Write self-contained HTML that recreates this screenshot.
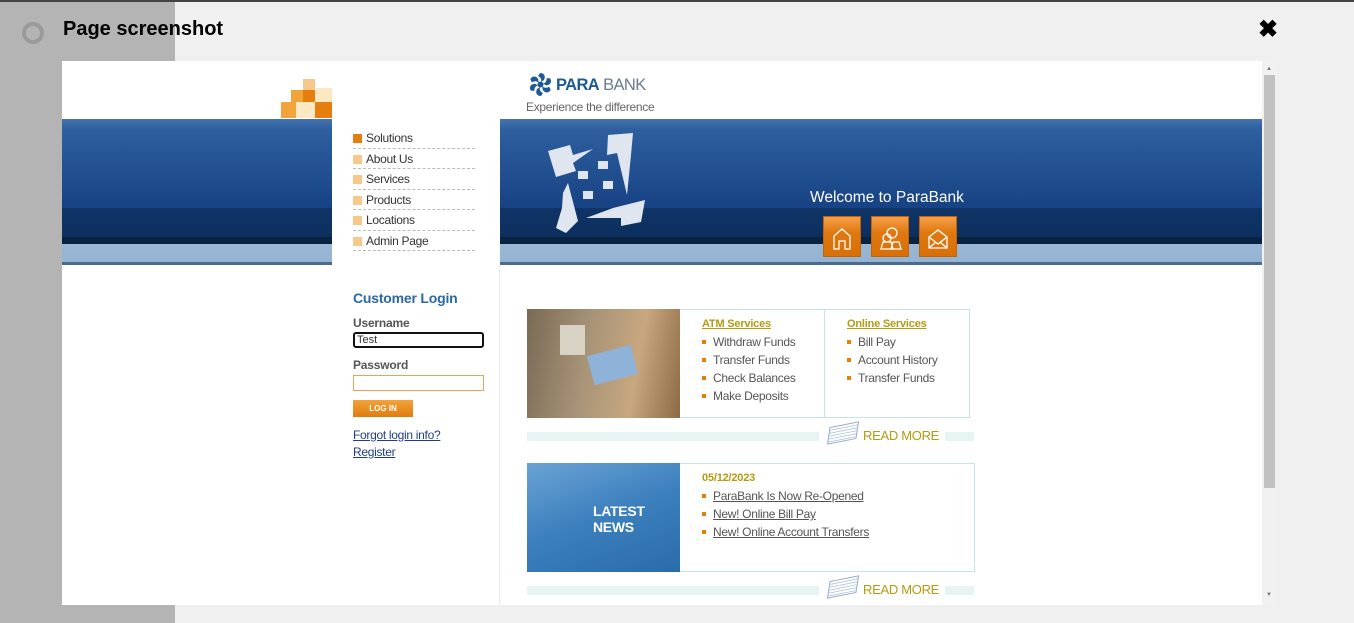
<!DOCTYPE html>
<html><head><meta charset="utf-8"><style>
*{margin:0;padding:0;box-sizing:border-box}
body{width:1354px;height:623px;overflow:hidden;background:#f0f0f0;font-family:"Liberation Sans",Arial,sans-serif;position:relative}
.abs{position:absolute}
.band{position:absolute;top:119px;height:146px;background:linear-gradient(#4373b0 0px,#2f5f9e 10px,#1f4d8e 60px,#174283 89px,#0f3466 89px,#0c2f5e 118px,#0a2342 118px,#0a2342 125px,#9ab8d6 125px,#94b3d2 143px,#4a6a90 143px)}
.menu a{display:block;color:#333;font-size:12px;letter-spacing:-0.3px;text-decoration:none;height:20.5px;line-height:20px;border-bottom:1px dashed #bbb;padding-left:13px;position:relative;width:122px}
.menu a:before{content:"";position:absolute;left:0;top:6px;width:9px;height:9px;background:#f6c98a}
.menu a.f:before{background:#e67e0d}
ul.l{list-style:none}
ul.l li{font-size:12px;letter-spacing:-0.3px;color:#555;height:18px;line-height:18px;padding-left:11px;position:relative}
ul.l li:before{content:"";position:absolute;left:0;top:7px;width:4px;height:4px;background:#e67e0d}
.gt{color:#b39a10;font-weight:bold;font-size:11px;letter-spacing:-0.2px;text-decoration:underline}
.rm{position:absolute;height:9px;background:#e6f4f4}
.ic{position:absolute;top:216px;width:38px;height:41px;background:linear-gradient(#f5a04a,#e0780f 40%,#d86f08);border:1px solid #c0650a}
</style></head><body>
<div class="abs" style="left:0;top:0;width:1354px;height:2px;background:#444"></div>
<div class="abs" style="left:0;top:2px;width:175px;height:621px;background:#b4b4b4"></div>
<div class="abs" style="left:22px;top:22px;width:22px;height:22px;border-radius:50%;border:4px solid #9a9a9a"></div>
<div class="abs" style="left:63px;top:18px;font-size:20px;font-weight:bold;color:#000">Page screenshot</div>
<div class="abs" style="left:1258px;top:15px;font-size:24px;font-weight:bold;color:#000">✖</div>
<div class="abs" style="left:62px;top:61px;width:1200px;height:544px;background:#fff;overflow:hidden"></div>
<div class="abs" style="left:1262px;top:61px;width:14px;height:544px;background:#f1f1f1"></div>
<div class="abs" style="left:1264px;top:75px;width:11px;height:413px;background:#c1c1c1"></div>
<div class="abs" style="left:1266px;top:66px;font-size:6px;color:#777">▲</div>
<div class="abs" style="left:1266px;top:592px;font-size:6px;color:#777">▼</div>
<div class="abs" style="left:303px;top:79px;width:12px;height:11px;background:#f6c98a"></div>
<div class="abs" style="left:291px;top:90px;width:12px;height:12px;background:#f2a33a"></div>
<div class="abs" style="left:303px;top:90px;width:12px;height:12px;background:#e67e0d"></div>
<div class="abs" style="left:315px;top:88px;width:17px;height:14px;background:#fde8c4"></div>
<div class="abs" style="left:281px;top:102px;width:15px;height:16px;background:#f2a33a"></div>
<div class="abs" style="left:296px;top:102px;width:19px;height:16px;background:#fde8c4"></div>
<div class="abs" style="left:315px;top:102px;width:17px;height:16px;background:#e67e0d"></div>
<svg class="abs" style="left:527px;top:71px" width="27" height="27" viewBox="0 0 27 27"><g fill="#1f5a96"><circle cx="13.5" cy="13.5" r="3"/><path d="M13 2c4 0 6 3 4 7l-3 2c1-3-1-5-3-6z"/><path d="M13 2c4 0 6 3 4 7l-3 2c1-3-1-5-3-6z" transform="rotate(60 13.5 13.5)"/><path d="M13 2c4 0 6 3 4 7l-3 2c1-3-1-5-3-6z" transform="rotate(120 13.5 13.5)"/><path d="M13 2c4 0 6 3 4 7l-3 2c1-3-1-5-3-6z" transform="rotate(180 13.5 13.5)"/><path d="M13 2c4 0 6 3 4 7l-3 2c1-3-1-5-3-6z" transform="rotate(240 13.5 13.5)"/><path d="M13 2c4 0 6 3 4 7l-3 2c1-3-1-5-3-6z" transform="rotate(300 13.5 13.5)"/></g></svg>
<div class="abs" style="left:556px;top:76px;font-size:16.5px;color:#1f5a96;letter-spacing:-0.6px"><b>PARA</b><span style="color:#6b7c8c"> BANK</span></div>
<div class="abs" style="left:526px;top:100px;font-size:12px;color:#666;letter-spacing:-0.3px">Experience the difference</div>
<div class="band" style="left:62px;width:270px"></div>
<div class="band" style="left:500px;width:762px"></div>
<svg class="abs" style="left:548px;top:133px" width="100" height="100" viewBox="0 0 100 100"><g fill="#dfe6ef"><path d="M0 18l22-6 3 10 20-6-20 14 3 8-20 6z"/><path d="M60 2l25-2-2 22-4 40-10-42-10 2z"/><path d="M15 60l5-10 10 38-12 12-10-5 6-20z"/><path d="M65 75l32-8 -4 22-20 4 0-8-35 0z"/><rect x="30" y="38" width="10" height="8"/><rect x="50" y="28" width="10" height="8"/><rect x="35" y="58" width="10" height="8"/><rect x="55" y="48" width="10" height="8"/></g></svg>
<div class="abs" style="left:810px;top:189px;font-size:15.5px;color:#fff">Welcome to ParaBank</div>
<div class="ic" style="left:823px"><svg width="36" height="39"><path d="M10 32v-13l8-7 8 7v13h-5v-8h-6v8z" fill="none" stroke="#fff" stroke-width="1.3"/></svg></div>
<div class="ic" style="left:871px"><svg width="36" height="39"><circle cx="20" cy="16" r="5" fill="none" stroke="#fff" stroke-width="1.3"/><circle cx="15" cy="21" r="4" fill="none" stroke="#fff" stroke-width="1.3"/><path d="M9 32l2-7h8l2 7zM19 32l2-7h6l2 7z" fill="none" stroke="#fff" stroke-width="1.3"/></svg></div>
<div class="ic" style="left:919px"><svg width="36" height="39"><path d="M9 20l9-7 9 7v11H9zM9 20l9 7 9-7M9 31l7-6M27 31l-7-6" fill="none" stroke="#fff" stroke-width="1.3"/></svg></div>
<div class="menu abs" style="left:353px;top:128px">
<a class="f">Solutions</a><a>About Us</a><a>Services</a><a>Products</a><a>Locations</a><a>Admin Page</a>
</div>
<div class="abs" style="left:499px;top:265px;width:1px;height:340px;background:#e4ecec"></div>
<div class="abs" style="left:353px;top:290px;font-size:14px;font-weight:bold;color:#2b68a5;letter-spacing:-0.2px">Customer Login</div>
<div class="abs" style="left:353px;top:316px;font-size:12px;font-weight:bold;color:#555;letter-spacing:-0.2px">Username</div>
<div class="abs" style="left:353px;top:332px;width:131px;height:16px;border:2px solid #111;border-radius:3px;font-size:11px;line-height:12px;padding-left:2px;color:#333">Test</div>
<div class="abs" style="left:353px;top:358px;font-size:12px;font-weight:bold;color:#555;letter-spacing:-0.2px">Password</div>
<div class="abs" style="left:353px;top:375px;width:131px;height:16px;border:1px solid #e8a25a"></div>
<div class="abs" style="left:353px;top:400px;width:60px;height:17px;background:linear-gradient(#f2a33a,#e07c10);color:#fff;font-size:8px;font-weight:bold;text-align:center;line-height:17px">LOG IN</div>
<div class="abs" style="left:353px;top:428px;font-size:12px;color:#1f3d8a;text-decoration:underline;letter-spacing:-0.3px">Forgot login info?</div>
<div class="abs" style="left:353px;top:445px;font-size:12px;color:#1f3d8a;text-decoration:underline;letter-spacing:-0.3px">Register</div>
<div class="abs" style="left:527px;top:309px;width:443px;height:109px;border:1px solid #c6e4e4"></div>
<div class="abs" style="left:527px;top:309px;width:153px;height:109px;background:linear-gradient(100deg,#7a6a55 0%,#a89478 40%,#c7a77f 70%,#8d6a45 100%)"></div>
<div class="abs" style="left:560px;top:325px;width:25px;height:30px;background:#d8d2c4"></div>
<div class="abs" style="left:590px;top:350px;width:45px;height:30px;background:#8fb2d8;transform:rotate(-15deg)"></div>
<div class="abs" style="left:824px;top:310px;width:1px;height:107px;background:#c6e4e4"></div>
<div class="abs gt" style="left:702px;top:318px">ATM Services</div>
<ul class="l abs" style="left:702px;top:333px"><li>Withdraw Funds</li><li>Transfer Funds</li><li>Check Balances</li><li>Make Deposits</li></ul>
<div class="abs gt" style="left:847px;top:318px">Online Services</div>
<ul class="l abs" style="left:847px;top:333px"><li>Bill Pay</li><li>Account History</li><li>Transfer Funds</li></ul>
<div class="rm" style="left:527px;top:432px;width:292px"></div>
<div class="rm" style="left:945px;top:432px;width:29px"></div>
<div class="abs" style="left:829px;top:424px;width:28px;height:18px;border:1px solid #9ac;transform:skewX(-20deg) rotate(-12deg);background:repeating-linear-gradient(#fff 0 2px,#bcd 2px 3px)"></div>
<div class="abs" style="left:863px;top:428px;font-size:13px;color:#b39a10;letter-spacing:-0.3px">READ MORE</div>
<div class="abs" style="left:527px;top:463px;width:448px;height:109px;border:1px solid #c6e4e4"></div>
<div class="abs" style="left:527px;top:463px;width:153px;height:109px;background:linear-gradient(160deg,#6aa3d4,#3b7fbd 50%,#2a6ca9)"></div>
<div class="abs" style="left:593px;top:503px;font-size:14px;font-weight:bold;color:#fff;line-height:16px;letter-spacing:-0.3px">LATEST<br>NEWS</div>
<div class="abs" style="left:702px;top:472px;font-size:11px;font-weight:bold;color:#b39a10;letter-spacing:-0.2px">05/12/2023</div>
<ul class="l abs" style="left:702px;top:487px"><li style="text-decoration:underline">ParaBank Is Now Re-Opened</li><li style="text-decoration:underline">New! Online Bill Pay</li><li style="text-decoration:underline">New! Online Account Transfers</li></ul>
<div class="rm" style="left:527px;top:586px;width:292px"></div>
<div class="rm" style="left:945px;top:586px;width:29px"></div>
<div class="abs" style="left:829px;top:578px;width:28px;height:18px;border:1px solid #9ac;transform:skewX(-20deg) rotate(-12deg);background:repeating-linear-gradient(#fff 0 2px,#bcd 2px 3px)"></div>
<div class="abs" style="left:863px;top:582px;font-size:13px;color:#b39a10;letter-spacing:-0.3px">READ MORE</div>
</body></html>
